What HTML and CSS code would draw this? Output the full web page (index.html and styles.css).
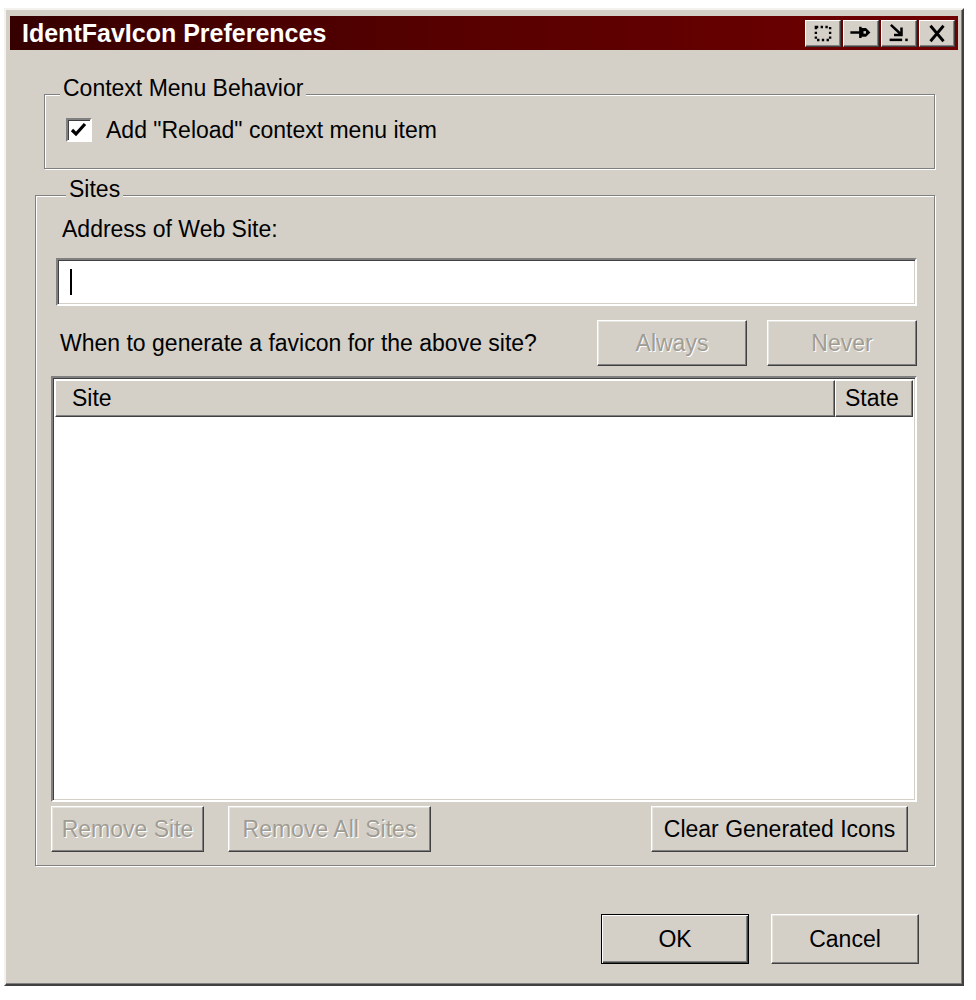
FILE: index.html
```html
<!DOCTYPE html>
<html lang="en">
<head>
    <meta charset="UTF-8">
    <title>IdentFavIcon Preferences</title>
    <link rel="stylesheet" href="styles.css">
</head>
<body>
    <div class="window">
        <div class="titlebar">
            <span class="title">IdentFavIcon Preferences</span>
            <div class="tbtns">
                <span class="tbtn">
                    <svg width="22" height="19" viewBox="0 0 18 16"><rect x="3" y="2.5" width="12" height="11" fill="none" stroke="#000" stroke-width="2" stroke-dasharray="2 2"/></svg>
                </span>
                <span class="tbtn">
                    <svg width="24" height="20" viewBox="0 0 18 16"><path d="M0.5 7.5h8M8.5 3v9" stroke="#000" stroke-width="2" fill="none"/><path d="M9 4h4l3.5 3.5-3.5 3.5H9z" fill="#000"/><path d="M11 6.5h2v2h-2z" fill="#d4d0c8"/></svg>
                </span>
                <span class="tbtn">
                    <svg width="24" height="20" viewBox="0 0 18 16"><path d="M2.5 1.5l8 7.5M5 9.5h6V3.5" stroke="#000" stroke-width="2" fill="none"/><path d="M1.5 13.5h10" stroke="#000" stroke-width="2"/><rect x="14" y="12.5" width="2" height="2" fill="#000"/></svg>
                </span>
                <span class="tbtn">
                    <svg width="22" height="19" viewBox="0 0 18 16"><path d="M3.5 1.5l11 13M14.5 1.5l-11 13" stroke="#000" stroke-width="2.4" fill="none"/></svg>
                </span>
            </div>
        </div>

        <fieldset class="group group-menu">
            <legend>Context Menu Behavior</legend>
            <div class="check-row">
                <span class="checkbox">
                    <svg width="18" height="16" viewBox="0 0 18 16"><path d="M2 8l4 4 9-10" stroke="#000" stroke-width="3.2" fill="none"/></svg>
                </span>
                <span>Add "Reload" context menu item</span>
            </div>
        </fieldset>

        <fieldset class="group group-sites">
            <legend>Sites</legend>
            <div class="field-label">Address of Web Site:</div>
            <div class="textbox"><span class="caret"></span></div>
            <div class="question-row">
                <span class="question">When to generate a favicon for the above site?</span>
                <div class="btn-pair">
                    <button class="btn btn-state" disabled>Always</button>
                    <button class="btn btn-state" disabled>Never</button>
                </div>
            </div>
            <div class="listview">
                <div class="list-head">
                    <div class="col col-site">Site</div>
                    <div class="col col-state">State</div>
                </div>
                <div class="list-body"></div>
            </div>
            <div class="list-actions">
                <button class="btn btn-remove" disabled>Remove Site</button>
                <button class="btn btn-remove-all" disabled>Remove All Sites</button>
                <button class="btn btn-clear">Clear Generated Icons</button>
            </div>
        </fieldset>

        <div class="footer">
            <button class="btn btn-dialog btn-default">OK</button>
            <button class="btn btn-dialog">Cancel</button>
        </div>
    </div>
</body>
</html>
```

FILE: styles.css
```css
body {
    margin: 0;
    background-color: #fff;
    font-family: "Liberation Sans", Arial, sans-serif;
    font-size: 23px;
    color: #000;
}
.window {
    margin: 8px 0 0 4px;
    width: 960px;
    height: 978px;
    box-sizing: border-box;
    background-color: #d4d0c8;
    border: 2px solid;
    border-color: #f4f2ee #404040 #404040 #f4f2ee;
    box-shadow: inset -1px -1px #808080;
    display: flex;
    flex-direction: column;
}
.titlebar {
    margin: 6px 4px 0 4px;
    height: 34px;
    padding-left: 12px;
    background: linear-gradient(to right, #360000, #560000 45%, #700000);
    color: #fff;
    font-weight: bold;
    font-size: 25px;
    display: flex;
    align-items: center;
}
.title {
    flex: 1;
}
.tbtns {
    display: flex;
    gap: 2px;
    margin-right: 3px;
}
.tbtn {
    width: 36px;
    height: 27px;
    box-sizing: border-box;
    background-color: #d4d0c8;
    border: 1px solid;
    border-color: #fff #404040 #404040 #fff;
    box-shadow: inset -1px -1px #808080;
    display: flex;
    align-items: center;
    justify-content: center;
}

/* group boxes */
.group {
    border: 1px solid #808080;
    box-shadow: 1px 1px 0 #fff, inset 1px 1px 0 #fff;
    padding: 0;
    min-width: 0;
}
.group legend {
    margin-left: 15px;
    padding: 0 3px 12px;
    line-height: 26px;
    background-color: #d4d0c8;
}
.group-menu {
    margin: 25px 27px 0 38px;
    padding-bottom: 25px;
}
.group-sites {
    margin: 7px 27px 0 29px;
    padding: 0 17px 13px 15px;
}
.check-row {
    margin: 4px 0 0 21px;
    height: 26px;
    display: flex;
    align-items: center;
    gap: 14px;
}
.checkbox {
    width: 26px;
    height: 24px;
    box-sizing: border-box;
    background-color: #fff;
    border: 2px solid;
    border-color: #808080 #fff #fff #808080;
    box-shadow: inset 1px 1px #404040;
    display: flex;
    align-items: center;
    justify-content: center;
}

/* sites */
.field-label {
    margin: 2px 0 0 11px;
    line-height: 26px;
}
.textbox,
.listview {
    box-sizing: border-box;
    background-color: #fff;
    border: 2px solid;
    border-color: #808080 #fff #fff #808080;
    box-shadow: inset 1px 1px #404040, inset -1px -1px #d4d0c8;
}
.textbox {
    margin: 16px 0 0 5px;
    height: 48px;
    display: flex;
    align-items: center;
    padding-left: 12px;
}
.caret {
    width: 2px;
    height: 26px;
    background-color: #000;
}
.question-row {
    margin-top: 14px;
    display: flex;
    align-items: center;
    justify-content: space-between;
}
.question {
    margin-left: 9px;
}
.btn-pair {
    display: flex;
    gap: 20px;
}
.listview {
    margin-top: 10px;
    height: 426px;
    display: flex;
    flex-direction: column;
    padding: 2px;
}
.list-head {
    height: 37px;
    display: flex;
}
.col {
    box-sizing: border-box;
    background-color: #d4d0c8;
    border: 1px solid;
    border-color: #fff #404040 #404040 #fff;
    box-shadow: inset -1px -1px #808080;
    display: flex;
    align-items: center;
}
.col-site {
    flex: 1;
    padding-left: 16px;
}
.col-state {
    width: 78px;
    padding-left: 9px;
}
.list-body {
    flex: 1;
}
.list-actions {
    margin-top: 4px;
    display: flex;
    gap: 24px;
}

/* buttons */
.btn {
    font: inherit;
    color: #000;
    height: 46px;
    padding: 0;
    background-color: #d4d0c8;
    border: 1px solid;
    border-color: #fff #404040 #404040 #fff;
    box-shadow: inset -1px -1px #808080, inset 1px 1px #e6e4df;
}
.btn:disabled {
    color: #a09c94;
    text-shadow: 1px 1px 0 #fff;
}
.btn-state {
    width: 150px;
}
.btn-remove {
    width: 153px;
}
.btn-remove-all {
    width: 203px;
}
.btn-clear {
    width: 257px;
    margin: 0 9px 0 auto;
}
.footer {
    margin: 48px 43px 0 0;
    display: flex;
    justify-content: flex-end;
    gap: 22px;
}
.btn-dialog {
    width: 148px;
    height: 50px;
}
.btn-default {
    border: 1px solid #000;
    box-shadow: inset 1px 1px #fff, inset -1px -1px #404040, inset -2px -2px #808080;
}
```
